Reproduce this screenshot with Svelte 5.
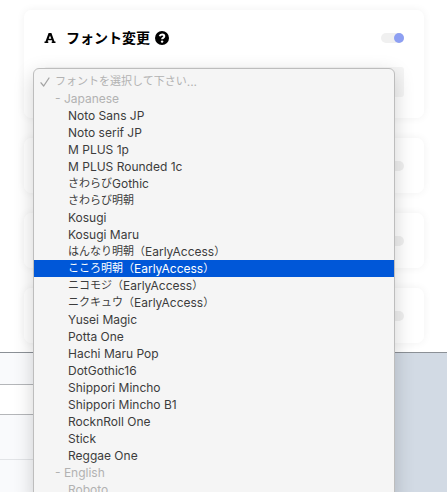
<script lang="ts">
  type Option = { label: string; kind?: 'placeholder' | 'group' | 'muted' };

  const options: Option[] = [
    { label: 'フォントを選択して下さい...', kind: 'placeholder' },
    { label: '- Japanese', kind: 'group' },
    { label: 'Noto Sans JP' },
    { label: 'Noto serif JP' },
    { label: 'M PLUS 1p' },
    { label: 'M PLUS Rounded 1c' },
    { label: 'さわらびGothic' },
    { label: 'さわらび明朝' },
    { label: 'Kosugi' },
    { label: 'Kosugi Maru' },
    { label: 'はんなり明朝（EarlyAccess）' },
    { label: 'こころ明朝（EarlyAccess）' },
    { label: 'ニコモジ（EarlyAccess）' },
    { label: 'ニクキュウ（EarlyAccess）' },
    { label: 'Yusei Magic' },
    { label: 'Potta One' },
    { label: 'Hachi Maru Pop' },
    { label: 'DotGothic16' },
    { label: 'Shippori Mincho' },
    { label: 'Shippori Mincho B1' },
    { label: 'RocknRoll One' },
    { label: 'Stick' },
    { label: 'Reggae One' },
    { label: '- English', kind: 'group' },
    { label: 'Roboto', kind: 'muted' },
  ];

  let enabled = $state(true);
  let others = $state([false, false, false]);
  let active = $state(11);
  let selected = $state(0);

  // Japanese runs are set a size smaller than the Latin ones
  function splitRuns(label: string): string[] {
    return label.match(/[\x20-\x7e]+|[^\x20-\x7e]+/g) ?? [];
  }

  function isJapanese(run: string): boolean {
    return run.charCodeAt(0) > 0x7e;
  }
</script>

<div class="page">
  <main class="panel">
    <section class="card">
      <header class="card__header">
        <h2>
          <svg class="mark" viewBox="0 0 12 10" aria-hidden="true">
            <path d="M4.6 0h2.8l3.1 8.5h1V10H7.7V8.5h.7L8 7.2H4l-.4 1.3h.7V10H.5V8.5h1zM6 2.4 4.7 5.7h2.6z" />
          </svg>
          フォント変更
          <svg class="help" viewBox="0 0 14 14" aria-hidden="true">
            <circle cx="7" cy="7" r="7" />
            <path d="M4.7 5.3C5 4 5.8 3.5 7.1 3.5c1.4 0 2.2.8 2.2 1.8 0 1.6-2.2 1.5-2.2 3" />
            <circle class="help__dot" cx="7.1" cy="10.6" r="1.2" />
          </svg>
        </h2>
        <input class="toggle" type="checkbox" aria-label="フォント変更" bind:checked={enabled} />
      </header>

      <div class="picker">
        <select class="picker__select" aria-label="フォント" bind:value={selected}>
          {#each options as option, index}
            <option value={index} disabled={option.kind !== undefined}>{option.label}</option>
          {/each}
        </select>

        <div class="menu" role="listbox" aria-label="フォント">
          {#each options as option, index}
            <button
              type="button"
              role="option"
              class={['menu__item', option.kind]}
              class:active={index === active}
              aria-selected={index === selected}
              disabled={option.kind !== undefined}
              onmouseenter={() => (active = index)}
              onclick={() => (selected = index)}
            >
              <span class="menu__check">
                {#if index === selected}
                  <svg viewBox="0 0 10 10" aria-hidden="true"><path d="M1 5.8 3.7 9 9 1" /></svg>
                {/if}
              </span>
              {#each splitRuns(option.label) as run}
                <span class="run" class:run--ja={isJapanese(run)}>{run}</span>
              {/each}
            </button>
          {/each}
        </div>
      </div>
    </section>

    {#each others as _, index}
      <section class="card card--closed">
        <input class="toggle" type="checkbox" aria-label={`設定 ${index + 2}`} bind:checked={others[index]} />
      </section>
    {/each}
  </main>

  <div class="backdrop">
    <div class="sheet">
      <div class="sheet__head"></div>
      <div class="sheet__row"></div>
      <div class="sheet__foot"></div>
    </div>
  </div>
</div>

<style>
  :global(body) {
    margin: 0;
  }

  .page {
    display: flex;
    flex-direction: column;
    height: 100vh;
    overflow: hidden;
    background: #fff;
    color: #000;
    font-family: Inter, 'Noto Sans CJK JP', sans-serif;
  }

  .panel {
    display: grid;
    gap: 20px;
    padding: 10px 23px 9px 24px;
    border-bottom: 1px solid #8b9096;
  }

  .card {
    padding: 18px 20px 21px;
    border-radius: 7px;
    background: #fff;
    box-shadow: 0 0 8px rgb(0 0 0 / 6%);
  }

  .card--closed {
    display: flex;
    justify-content: flex-end;
    padding: 23px 20px 22px;
  }

  .card__header {
    display: flex;
    align-items: center;
    justify-content: space-between;
    height: 20px;
    margin-bottom: 19px;
  }

  h2 {
    display: flex;
    align-items: center;
    margin: 0;
    font-size: 14px;
    line-height: 20px;
    font-weight: 700;
  }

  .mark {
    width: 12px;
    height: 10px;
    margin-right: 10px;
    fill-rule: evenodd;
  }

  .help {
    width: 14px;
    height: 14px;
    margin-left: 5px;
  }

  .help path {
    fill: none;
    stroke: #fff;
    stroke-width: 2;
  }

  .help__dot {
    fill: #fff;
  }

  .toggle {
    appearance: none;
    display: flex;
    width: 23px;
    height: 10px;
    margin: 0;
    border-radius: 5px;
    background: #f0f0f0;
  }

  .toggle:checked {
    justify-content: flex-end;
  }

  .toggle:checked::before {
    content: '';
    width: 10px;
    height: 10px;
    border-radius: 50%;
    background: #8d9ff2;
  }

  .picker {
    position: relative;
  }

  .picker__select {
    appearance: none;
    display: block;
    width: 100%;
    height: 30px;
    border: 0;
    border-radius: 3px;
    background: #f5f5f5;
    font: inherit;
    font-size: 12px;
  }

  .menu {
    position: absolute;
    z-index: 1;
    top: 1px;
    right: 9px;
    left: -11px;
    padding: 4px 0;
    border: 1px solid #bdbdbd;
    border-radius: 6px;
    background: #f5f5f5;
    box-shadow: 0 6px 20px rgb(0 0 0 / 18%);
  }

  .menu__item {
    display: flex;
    align-items: center;
    width: 100%;
    height: 17px;
    padding: 0 0 0 34px;
    border: 0;
    background: none;
    color: #3c3c3c;
    font: inherit;
    font-size: 12px;
    line-height: 17px;
    white-space: nowrap;
  }

  .menu__item.placeholder,
  .menu__item.group {
    padding-left: 21px;
  }

  .menu__item.placeholder,
  .menu__item.group,
  .menu__item.muted {
    color: #b2b2b2;
  }

  .menu__item.placeholder {
    padding-left: 6px;
  }

  .menu__item.active {
    background: #0057d8;
    color: #fff;
  }

  .run--ja {
    font-size: 11px;
  }

  .placeholder .menu__check {
    display: flex;
    width: 15px;
  }

  .menu__check svg {
    width: 10px;
    height: 10px;
    fill: none;
    stroke: #a3a3a3;
    stroke-width: 1.3;
    stroke-linecap: round;
    stroke-linejoin: round;
  }

  .backdrop {
    flex: 1;
    background: #d2dae4;
  }

  .sheet {
    display: flex;
    flex-direction: column;
    width: 50%;
    height: 100%;
    background: #f9fafc;
  }

  .sheet__head {
    height: 31px;
  }

  .sheet__row {
    height: 29px;
    border: solid #b4b6b9;
    border-width: 1px 0;
    background: #fff;
  }

  .sheet__foot {
    height: 44px;
    border-bottom: 1px solid #e2e4e7;
  }
</style>
